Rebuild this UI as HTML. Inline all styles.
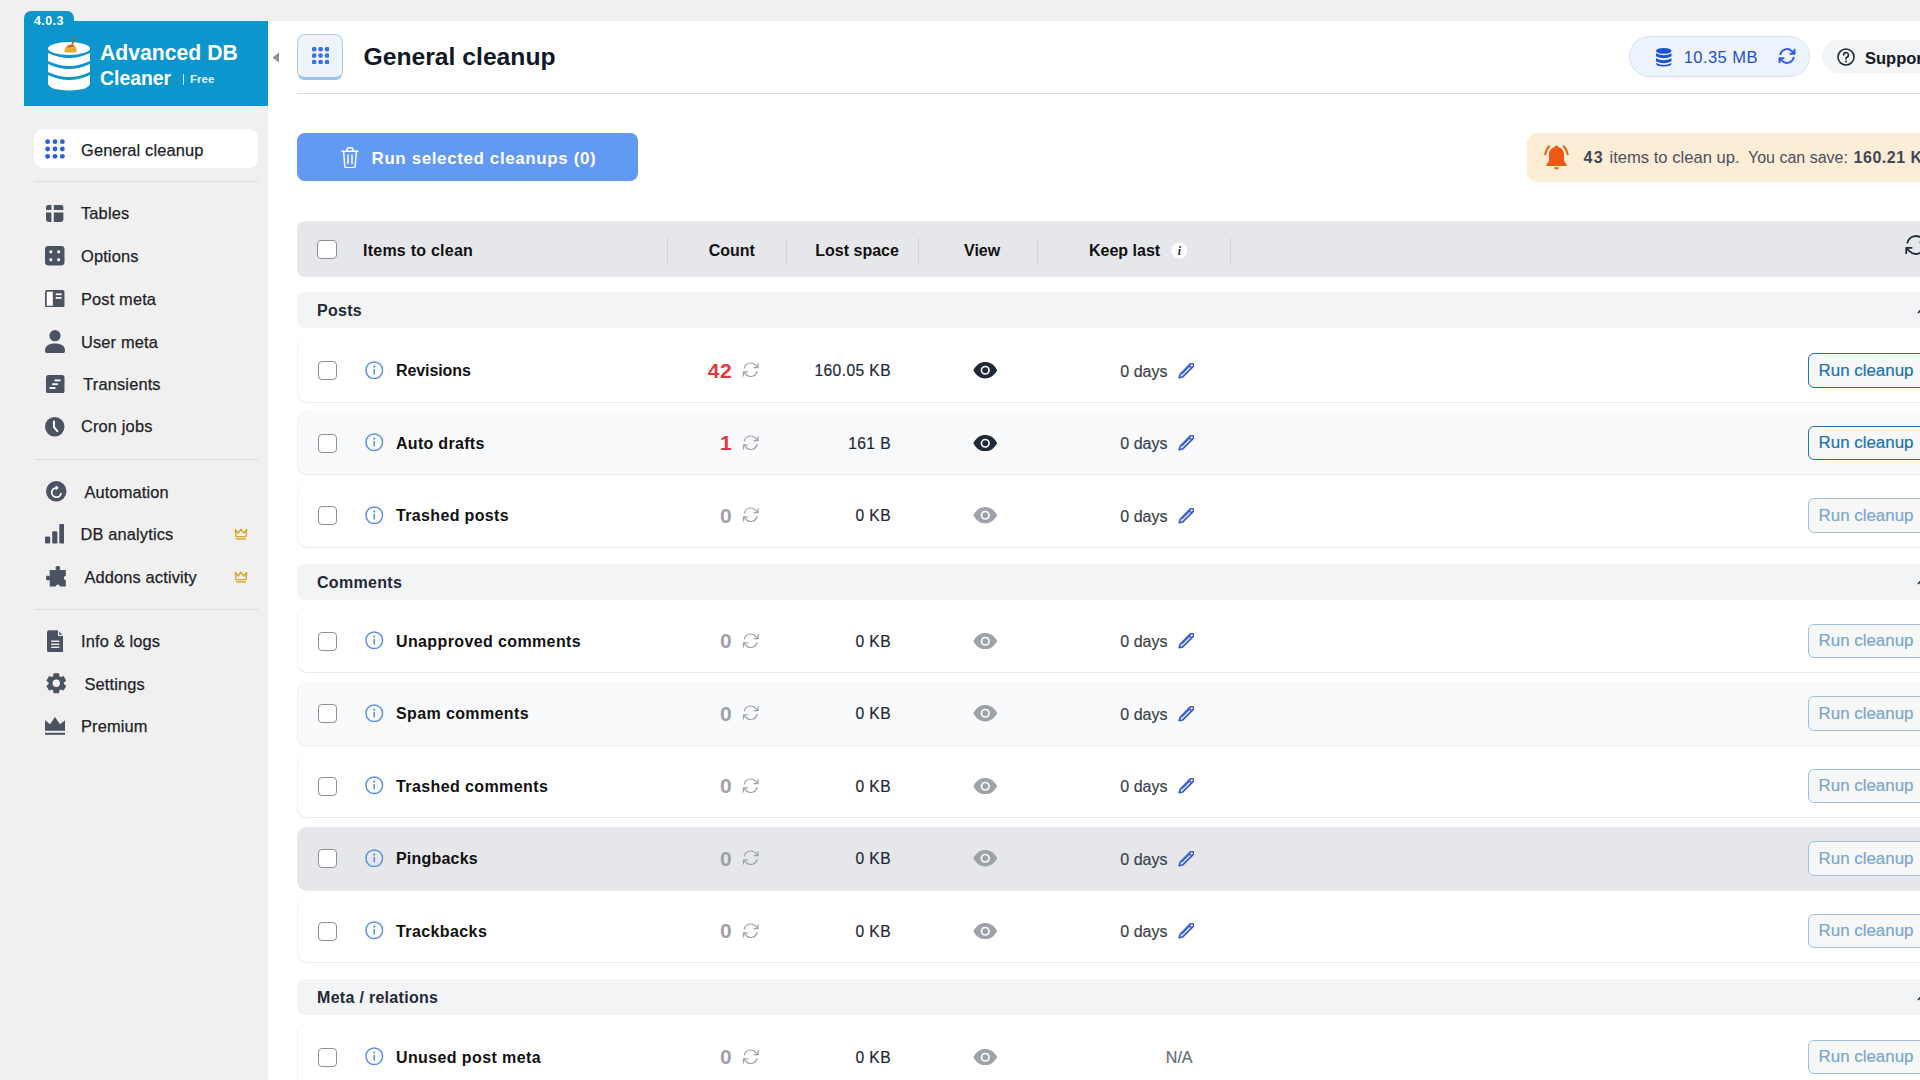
<!DOCTYPE html>
<html><head><meta charset="utf-8">
<style>
*{box-sizing:border-box;margin:0;padding:0}
html,body{width:1920px;height:1080px;overflow:hidden;background:#f0f0f1;font-family:"Liberation Sans",sans-serif;color:#1d2327}
.a{position:absolute}
.t{position:absolute;white-space:nowrap;line-height:1}
#main{position:absolute;left:268px;top:21px;width:1652px;height:1059px;background:#fff}
.nav{position:absolute;left:81px;font-size:16.4px;letter-spacing:0.15px;-webkit-text-stroke:0.25px #1d2327;color:#1d2327;white-space:nowrap;line-height:1}
.ni{position:absolute;left:45px;width:20px;height:20px}
.hsep{position:absolute;top:238px;width:1px;height:26px;background:#d2d4d9}
.sec{position:absolute;left:297px;width:1640px;height:36.3px;background:#f3f4f6;border-radius:8px}
.sec span{position:absolute;left:20px;top:11.4px;font-size:16px;letter-spacing:0.3px;font-weight:bold;color:#1f2937;line-height:1;white-space:nowrap}
.chev{position:absolute;left:1619.5px;top:14.5px}
.row{position:absolute;left:297px;width:1640px;height:64px;background:#fff;box-shadow:inset 0 -1px 0 #e8eaed,inset 1px 0 0 #f1f2f4;border-radius:10px}
.row.alt{background:#f9fafb}
.row.hov{background:#e5e7eb;box-shadow:none}
.cb{position:absolute;left:21px;top:22.5px;width:19px;height:19px;border:1.5px solid #8c8f94;border-radius:4px;background:#fff}
.inf{position:absolute;left:68.3px;top:22.3px}
.nm{position:absolute;left:99px;top:24.6px;font-size:16px;font-weight:bold;color:#111;line-height:1;white-space:nowrap}
.cnt{position:absolute;right:1205px;top:21.3px;letter-spacing:0.4px;font-size:21px;font-weight:bold;color:#9fa3a9;line-height:1}
.cnt.red{color:#e03a3e}
.rf{position:absolute;left:443.9px;top:21.6px}
.ls{position:absolute;right:1046px;top:24.9px;font-size:15.6px;letter-spacing:0.42px;-webkit-text-stroke:0.2px #1f2937;color:#1f2937;line-height:1;white-space:nowrap}
.eye{position:absolute;left:675.5px;top:23.5px}
.days{position:absolute;right:769.5px;top:25.1px;font-size:16px;color:#3c434a;-webkit-text-stroke:0.2px #3c434a;line-height:1;white-space:nowrap}
.days.na{right:744.5px;color:#6b7280}
.pen{position:absolute;left:880.5px;top:24.4px}
.btn{position:absolute;left:1511.4px;top:14.8px;width:140px;height:34.3px;border:1.3px solid #2271b1;border-radius:6px;background:#f6f7f7}
.btn span{position:absolute;left:9.2px;top:8.6px;font-size:16.9px;color:#2271b1;-webkit-text-stroke:0.2px currentColor;line-height:1;white-space:nowrap}
.btn.dis{border-color:#9ec0de}
.btn.dis span{color:#7aa6cf}
</style></head>
<body>
<!-- sidebar logo -->
<div class="a" style="left:24px;top:11px;width:50px;height:20px;background:#0c96cd;border-radius:7px 7px 0 0"></div>
<div class="a" style="left:24px;top:21px;width:244px;height:85px;background:#0c96cd"></div>
<div class="t" style="left:34px;top:15px;font-size:12.5px;font-weight:bold;color:#fff;letter-spacing:0.4px">4.0.3</div>
<svg class="a" style="left:47px;top:40px" width="45" height="52" viewBox="0 0 45 52">
 <g fill="#fff">
  <ellipse cx="22" cy="8.5" rx="21" ry="6.5"/>
  <path d="M1 13 Q22 23 43 13 V21 Q22 31 1 21Z"/>
  <path d="M1 24 Q22 34 43 24 V32 Q22 42 1 32Z"/>
  <path d="M1 35 Q22 45 43 35 V43 Q43 50 22 50.5 Q1 50 1 43Z"/>
 </g>
</svg>
<svg class="a" style="left:60px;top:34px" width="20" height="20" viewBox="0 0 20 20"><path d="M11.8 11L15.6 2.6" stroke="#8a6a3a" stroke-width="1.4" stroke-linecap="round"/><circle cx="15.6" cy="2.8" r="0.9" fill="#5aa070"/><path d="M4.6 18Q3.8 13.4 8.2 11.3L13.2 10.6Q16.8 13 16.9 18Q10.8 19.2 4.6 18Z" fill="#e9b13a"/><path d="M7.6 11.6L13.4 10.7L14.2 12.4L7.4 13.4Z" fill="#d8503a"/><path d="M7.5 15.5L7 18M10.5 14.5L10.5 18.5M13.5 14.5L14 18" stroke="#c88a20" stroke-width="0.6"/></svg>
<div class="t" style="left:100px;top:42px;font-size:21.2px;font-weight:bold;color:#fff">Advanced DB</div>
<div class="t" style="left:100px;top:68.5px;font-size:19.4px;font-weight:bold;color:#fff">Cleaner</div>
<div class="a" style="left:182.5px;top:74px;width:1.3px;height:11px;background:#cfe8f7"></div>
<div class="t" style="left:190px;top:74px;font-size:11.5px;font-weight:bold;color:#e3f2fb">Free</div>

<!-- main white -->
<div id="main"></div>

<!-- collapse arrow -->
<svg class="a" style="left:272px;top:52px" width="8" height="11" viewBox="0 0 8 11"><path d="M7 0.5 L0.5 5.5 L7 10.5Z" fill="#8e9399"/></svg>

<!-- nav active -->
<div class="a" style="left:34px;top:129px;width:224px;height:39px;background:#fff;border-radius:9px"></div>
<svg class="ni" style="top:139px;left:45px" width="19" height="19" viewBox="0 0 19 19"><g fill="#2f5fe0">
<circle cx="2.5" cy="2.5" r="2.3"/><circle cx="9.5" cy="2.5" r="2.3"/><circle cx="16.5" cy="2.5" r="2.3"/>
<circle cx="2.5" cy="9.5" r="2.3"/><circle cx="9.5" cy="9.5" r="2.3"/><circle cx="16.5" cy="9.5" r="2.3"/>
<circle cx="2.5" cy="16.5" r="2.3"/><circle cx="9.5" cy="16.5" r="2.3"/><circle cx="16.5" cy="16.5" r="2.3"/></g></svg>
<div class="nav" style="top:141.5px">General cleanup</div>
<div class="a" style="left:34px;top:180.5px;width:224px;height:1.5px;background:#dcdcde"></div>


<!-- nav items -->
<svg class="a" style="left:46.4px;top:205px" width="17.4" height="17" viewBox="0 0 17.4 17"><g fill="#4b5362">
<path d="M2.5 0H5.4V5H0V2.5A2.5 2.5 0 0 1 2.5 0Z"/><path d="M7.8 0H14.9A2.5 2.5 0 0 1 17.4 2.5V5H7.8Z"/><path d="M0 7.6H5.4V17H2.5A2.5 2.5 0 0 1 0 14.5Z"/><path d="M7.8 7.6H17.4V14.5A2.5 2.5 0 0 1 14.9 17H7.8Z"/></g></svg>
<div class="nav" style="top:205.4px">Tables</div>
<svg class="a" style="left:45.2px;top:246.1px" width="19.5" height="19.5" viewBox="0 0 20 20"><rect width="20" height="20" rx="3.5" fill="#4b5362"/><g fill="#fff"><circle cx="6" cy="6" r="1.6"/><circle cx="14" cy="6" r="1.6"/><circle cx="6" cy="14" r="1.6"/><circle cx="14" cy="14" r="1.6"/></g></svg>
<div class="nav" style="top:248.3px">Options</div>
<svg class="a" style="left:45.2px;top:289.6px" width="19.5" height="17.5" viewBox="0 0 20 18"><rect width="20" height="18" rx="2" fill="#4b5362"/><rect x="1.8" y="1.8" width="6.2" height="14.4" fill="#fff"/><rect x="11" y="3.5" width="6" height="1.8" fill="#fff"/><rect x="11" y="7.2" width="6" height="1.8" fill="#fff"/></svg>
<div class="nav" style="top:290.9px">Post meta</div>
<svg class="a" style="left:45px;top:329.8px" width="20" height="23.2" viewBox="0 0 20 23"><g fill="#4b5362"><circle cx="10" cy="5.6" r="5.6"/><path d="M0 20.5C0 15.5 4 13.3 10 13.3S20 15.5 20 20.5V21A2 2 0 0 1 18 23H2A2 2 0 0 1 0 21Z"/></g></svg>
<div class="nav" style="top:333.5px">User meta</div>
<svg class="a" style="left:46.3px;top:374.8px" width="18.5" height="18.5" viewBox="0 0 18.5 18.5"><rect width="18.5" height="18.5" rx="2.5" fill="#4b5362"/><g fill="#fff"><rect x="8.5" y="4.5" width="6" height="1.8"/><rect x="6" y="8.3" width="6" height="1.8"/><rect x="3.5" y="12.1" width="6" height="1.8"/></g></svg>
<div class="nav" style="top:375.7px;left:83.3px">Transients</div>
<svg class="a" style="left:45px;top:417.4px" width="19.5" height="19.5" viewBox="0 0 20 20"><circle cx="10" cy="10" r="10" fill="#4b5362"/><path d="M9.2 4.5V10.5L12.6 14.6" stroke="#fff" stroke-width="2" fill="none" stroke-linecap="round"/></svg>
<div class="nav" style="top:418.1px">Cron jobs</div>
<div class="a" style="left:34px;top:458.5px;width:224px;height:1.5px;background:#dcdcde"></div>

<svg class="a" style="left:46px;top:481px" width="20.5" height="20.5" viewBox="0 0 20 20"><circle cx="10" cy="10" r="10" fill="#4b5362"/><path d="M14.6 12.4A4.6 4.6 0 1 1 10 6.6" stroke="#fff" stroke-width="1.7" fill="none" stroke-linecap="round"/><path d="M9.5 4.1L12.4 6.7L9.5 9.3Z" fill="#fff"/></svg>
<div class="nav" style="top:483.5px;left:84.4px">Automation</div>
<svg class="a" style="left:44.8px;top:524.2px" width="19.5" height="19.5" viewBox="0 0 19.5 19.5"><g fill="#4b5362"><rect x="0" y="12.5" width="5.2" height="7" rx="1.3"/><rect x="7.2" y="7.2" width="5.2" height="12.3" rx="1.3"/><rect x="14.3" y="0" width="5.2" height="19.5" rx="1.3"/></g></svg>
<div class="nav" style="top:525.7px;left:80.5px">DB analytics</div>
<svg class="a" style="left:234px;top:528px" width="14" height="12" viewBox="0 0 14 12"><path d="M1.3 1.5L4.2 5L7 1.2L9.8 5L12.7 1.5L12 8.6H2Z" fill="none" stroke="#d6a624" stroke-width="1.4" stroke-linejoin="round"/><rect x="2" y="10.2" width="10" height="1.4" fill="#d6a624"/></svg>
<svg class="a" style="left:46.2px;top:566.3px" width="20" height="20.5" viewBox="0 0 20 20.5"><path fill="#4b5362" d="M3.7 3.9H10.4A2.3 2.3 0 1 1 13.4 3.9H19.8V10.1A2 2 0 0 0 19.8 14.1V20.4H13.9A2 2 0 0 0 9.9 20.4H3.7V13.5A2.3 2.3 0 1 1 3.7 10.5Z"/></svg>
<div class="nav" style="top:568.6px;left:84.4px">Addons activity</div>
<svg class="a" style="left:234px;top:571px" width="14" height="12" viewBox="0 0 14 12"><path d="M1.3 1.5L4.2 5L7 1.2L9.8 5L12.7 1.5L12 8.6H2Z" fill="none" stroke="#d6a624" stroke-width="1.4" stroke-linejoin="round"/><rect x="2" y="10.2" width="10" height="1.4" fill="#d6a624"/></svg>
<div class="a" style="left:34px;top:608.5px;width:224px;height:1.5px;background:#dcdcde"></div>

<svg class="a" style="left:46.6px;top:629.6px" width="16.7" height="22.5" viewBox="0 0 17 22.5"><path fill="#4b5362" d="M2 0H11L17 6V20.5A2 2 0 0 1 15 22.5H2A2 2 0 0 1 0 20.5V2A2 2 0 0 1 2 0Z"/><path d="M11.8 0.4V5.2H16.6" fill="none" stroke="#f0f0f1" stroke-width="1.2"/><g fill="#f0f0f1"><rect x="4.2" y="10.5" width="8.4" height="1.4"/><rect x="4.2" y="13.6" width="8.4" height="1.4"/><rect x="4.2" y="16.7" width="8.4" height="1.4"/></g></svg>
<div class="nav" style="top:633.2px">Info &amp; logs</div>
<svg class="a" style="left:45.8px;top:673.1px" width="20.6" height="20.6" viewBox="0 0 20.6 20.6"><path fill="#4b5362" fill-rule="evenodd" d="M13.59 3.45 L12.97 0.35 L7.63 0.35 L7.01 3.45 L6.01 4.03 L3.02 3.01 L0.35 7.64 L2.72 9.72 L2.72 10.88 L0.35 12.96 L3.02 17.59 L6.01 16.57 L7.01 17.15 L7.63 20.25 L12.97 20.25 L13.59 17.15 L14.59 16.57 L17.58 17.59 L20.25 12.96 L17.88 10.88 L17.88 9.72 L20.25 7.64 L17.58 3.01 L14.59 4.03Z M10.3 6.6A3.7 3.7 0 1 0 10.3 14A3.7 3.7 0 1 0 10.3 6.6Z"/></svg>
<div class="nav" style="top:675.7px;left:84.5px">Settings</div>
<svg class="a" style="left:45.1px;top:717px" width="20" height="18" viewBox="0 0 20 18"><path fill="#4b5362" d="M0 3.3L5 7.2L10 0L15 7.2L20 3.3V13.8H0Z"/><rect y="15.8" width="20" height="2" fill="#4b5362"/></svg>
<div class="nav" style="top:718.4px">Premium</div>


<!-- header -->
<div class="a" style="left:297px;top:33.6px;width:46px;height:46px;background:#eef3fc;border:1.2px solid #bccbe6;border-bottom:3px solid #98c2f2;border-radius:8px"></div>
<svg class="a" style="left:311.7px;top:46.9px" width="17.2" height="17.2" viewBox="0 0 17.2 17.2"><g fill="#3b73e0">
<circle cx="2.15" cy="2.15" r="2.35"/><circle cx="8.6" cy="2.15" r="2.35"/><circle cx="15.05" cy="2.15" r="2.35"/>
<circle cx="2.15" cy="8.6" r="2.35"/><circle cx="8.6" cy="8.6" r="2.35"/><circle cx="15.05" cy="8.6" r="2.35"/>
<circle cx="2.15" cy="15.05" r="2.35"/><circle cx="8.6" cy="15.05" r="2.35"/><circle cx="15.05" cy="15.05" r="2.35"/></g></svg>
<div class="t" style="left:363.5px;top:45px;font-size:24.7px;font-weight:bold;color:#101828">General cleanup</div>
<div class="a" style="left:297px;top:92.5px;width:1623px;height:1.3px;background:#dcdde0"></div>

<div class="a" style="left:1629px;top:36.3px;width:181px;height:40.5px;background:#eef4fe;border:1px solid #d5e1f5;border-radius:21px"></div>
<svg class="a" style="left:1656px;top:48px" width="15.5" height="18.5" viewBox="0 0 15.5 18.5"><g fill="#1e4fd6"><ellipse cx="7.75" cy="2.9" rx="7.75" ry="2.9"/><path d="M0 5.2Q7.75 9.2 15.5 5.2V8.3Q7.75 12.3 0 8.3Z"/><path d="M0 10.3Q7.75 14.3 15.5 10.3V13.2Q7.75 17.2 0 13.2Z"/><path d="M0 15Q7.75 19 15.5 15V15.6Q15.5 18.5 7.75 18.5Q0 18.5 0 15.6Z"/></g></svg>
<div class="t" style="left:1683.7px;top:49.3px;font-size:16.5px;letter-spacing:0.45px;color:#1f4fc6">10.35 MB</div>
<svg class="a" style="left:1776.5px;top:46.3px" width="20" height="20" viewBox="0 0 24 24"><path fill="none" stroke="#2d5fdc" stroke-width="2.3" stroke-linecap="round" stroke-linejoin="round" d="M16.023 9.348h4.992v-.001M2.985 19.644v-4.992m0 0h4.992m-4.993 0 3.181 3.183a8.25 8.25 0 0 0 13.803-3.7M4.031 9.865a8.25 8.25 0 0 1 13.803-3.7l3.181 3.182m0-4.991v4.99"/></svg>

<div class="a" style="left:1821.5px;top:39.8px;width:140px;height:33.6px;background:#f3f4f6;border-radius:17px"></div>
<svg class="a" style="left:1836.8px;top:48.4px" width="18" height="18" viewBox="0 0 18 18"><circle cx="9" cy="9" r="8" fill="none" stroke="#1f2937" stroke-width="1.6"/><path d="M6.6 7A2.4 2.4 0 1 1 9.9 9.2C9.3 9.5 9 9.9 9 10.6V11" fill="none" stroke="#1f2937" stroke-width="1.6" stroke-linecap="round"/><circle cx="9" cy="13.4" r="1" fill="#1f2937"/></svg>
<div class="t" style="left:1865px;top:49.5px;font-size:16.5px;font-weight:bold;color:#111827">Support</div>

<!-- run selected -->
<div class="a" style="left:297px;top:133px;width:341px;height:48.3px;background:#6299f3;border-radius:8px"></div>
<svg class="a" style="left:340.5px;top:146.5px" width="18" height="21.5" viewBox="0 0 18 21.5"><g fill="none" stroke="#fff" stroke-width="1.5" stroke-linecap="round" stroke-linejoin="round"><path d="M1 4.3H17"/><path d="M6 4.2V2.6A1.8 1.8 0 0 1 7.8 0.8H10.2A1.8 1.8 0 0 1 12 2.6V4.2"/><path d="M2.6 4.3L3.8 19A1.9 1.9 0 0 0 5.7 20.7H12.3A1.9 1.9 0 0 0 14.2 19L15.4 4.3"/><path d="M7 8V16.5"/><path d="M11 8V16.5"/></g></svg>
<div class="t" style="left:371.5px;top:149.6px;font-size:17px;font-weight:bold;letter-spacing:0.6px;color:#fff">Run selected cleanups (0)</div>

<!-- notice -->
<div class="a" style="left:1527px;top:133px;width:420px;height:48.5px;background:#fdecd6;border-radius:10px"></div>
<svg class="a" style="left:1535px;top:138px" width="45" height="40" viewBox="0 0 45 40"><g fill="#ea5a12"><path d="M21.5 7.4C22.6 7.4 23.1 8.2 23.1 9.1C26.6 9.9 29 12.9 29 16.6V22.6L31.9 27.6A0.4 0.4 0 0 1 31.6 28H11.4A0.4 0.4 0 0 1 11.1 27.6L14 22.6V16.6C14 12.9 16.4 9.9 19.9 9.1C19.9 8.2 20.4 7.4 21.5 7.4Z"/><path d="M19.2 29.3H23.8A2.3 2.3 0 0 1 19.2 29.3Z"/></g><g fill="none" stroke="#ea5a12" stroke-width="1.9" stroke-linecap="round"><path d="M14.3 8.3Q11 11.3 10.2 16.3"/><path d="M28.7 8.3Q32 11.3 32.8 16.3"/></g></svg>
<div class="t" style="left:1583.6px;top:149.6px;font-size:16px;font-weight:bold;letter-spacing:1.2px;color:#3f4754">43</div>
<div class="t" style="left:1609.5px;top:149.6px;font-size:16.6px;color:#4b5260">items to clean up.</div>
<div class="t" style="left:1748px;top:149.6px;font-size:16px;color:#4b5260">You can save:</div>
<div class="t" style="left:1853.6px;top:149.6px;font-size:16px;font-weight:bold;letter-spacing:0.5px;color:#3f4754">160.21 KB</div>

<!-- table header -->
<div class="a" style="left:297px;top:221px;width:1640px;height:56px;background:#e5e7eb;border-radius:8px"></div>
<div class="a" style="left:317px;top:239.5px;width:19.5px;height:19.5px;background:#fff;border:1.5px solid #8c8f94;border-radius:4px"></div>
<div class="t" style="left:363px;top:242.7px;letter-spacing:0.24px;font-size:16px;font-weight:bold;color:#111">Items to clean</div>
<div class="hsep" style="left:666.5px"></div>
<div class="t" style="left:708.7px;top:242.7px;font-size:16px;font-weight:bold;color:#111">Count</div>
<div class="hsep" style="left:786px"></div>
<div class="t" style="left:815.3px;top:242.7px;font-size:16px;font-weight:bold;color:#111">Lost space</div>
<div class="hsep" style="left:918px"></div>
<div class="t" style="left:964px;top:242.7px;font-size:16px;font-weight:bold;color:#111">View</div>
<div class="hsep" style="left:1037px"></div>
<div class="t" style="left:1089px;top:242.7px;font-size:16px;font-weight:bold;color:#111">Keep last</div>
<svg class="a" style="left:1171px;top:241.5px" width="17" height="17" viewBox="0 0 17 17"><circle cx="8.5" cy="8.5" r="8" fill="#fff"/><text x="8.5" y="12.8" text-anchor="middle" font-family="Liberation Serif" font-style="italic" font-weight="bold" font-size="12" fill="#1f2937">i</text></svg>
<div class="hsep" style="left:1230px"></div>
<svg class="a" style="left:1902.8px;top:231.7px" width="26" height="26" viewBox="0 0 24 24"><path fill="none" stroke="#1f2937" stroke-width="1.65" stroke-linecap="round" stroke-linejoin="round" d="M16.023 9.348h4.992v-.001M2.985 19.644v-4.992m0 0h4.992m-4.993 0 3.181 3.183a8.25 8.25 0 0 0 13.803-3.7M4.031 9.865a8.25 8.25 0 0 1 13.803-3.7l3.181 3.182m0-4.991v4.99"/></svg>

<!-- rows -->
<div class="sec" style="top:292px"><span>Posts</span><svg class="chev" width="10" height="7" viewBox="0 0 10 7"><path d="M1 6L5 2L9 6" fill="none" stroke="#1f2937" stroke-width="1.6"/></svg></div>
<div class="row" style="top:338.5px"><div class="cb"></div><svg class="inf" width="18.5" height="18.5" viewBox="0 0 18 18"><circle cx="9" cy="9" r="8.1" fill="none" stroke="#5b8fe6" stroke-width="1.4"/><circle cx="9" cy="5.4" r="1.05" fill="#5b8fe6"/><rect x="8.25" y="7.6" width="1.5" height="5.6" rx="0.6" fill="#5b8fe6"/></svg><div class="nm" style="letter-spacing:-0.1px">Revisions</div><div class="cnt red">42</div><svg class="rf" width="19.5" height="19.5" viewBox="0 0 24 24"><path fill="none" stroke="#9fa3a9" stroke-width="1.45" stroke-linecap="round" stroke-linejoin="round" d="M16.023 9.348h4.992v-.001M2.985 19.644v-4.992m0 0h4.992m-4.993 0 3.181 3.183a8.25 8.25 0 0 0 13.803-3.7M4.031 9.865a8.25 8.25 0 0 1 13.803-3.7l3.181 3.182m0-4.991v4.99"/></svg><div class="ls">160.05 KB</div><svg class="eye" width="24.5" height="16.5" viewBox="0 0 24 16"><path d="M0.3 8C3.5 2.2 7.5 0 12 0S20.5 2.2 23.7 8C20.5 13.8 16.5 16 12 16S3.5 13.8 0.3 8Z" fill="#1f2937"/><circle cx="12" cy="8" r="4.5" fill="#fff"/><circle cx="12" cy="8" r="2.9" fill="#1f2937"/></svg><div class="days">0 days</div><svg class="pen" width="16" height="16" viewBox="0 0 16 16"><path d="M1.2 14.8L2.1 11.2L12.4 0.9A1.9 1.9 0 0 1 15.1 3.6L4.8 13.9Z" fill="#dbe5fa" stroke="#3558c8" stroke-width="1.55" stroke-linejoin="round"/><path d="M11 2.4L13.6 5" stroke="#3558c8" stroke-width="1.4"/><path d="M3.8 11.3L12.2 2.9" stroke="#3558c8" stroke-width="1"/></svg><div class="btn"><span>Run cleanup</span></div></div>
<div class="row alt" style="top:411px"><div class="cb"></div><svg class="inf" width="18.5" height="18.5" viewBox="0 0 18 18"><circle cx="9" cy="9" r="8.1" fill="none" stroke="#5b8fe6" stroke-width="1.4"/><circle cx="9" cy="5.4" r="1.05" fill="#5b8fe6"/><rect x="8.25" y="7.6" width="1.5" height="5.6" rx="0.6" fill="#5b8fe6"/></svg><div class="nm" style="letter-spacing:0.3px">Auto drafts</div><div class="cnt red">1</div><svg class="rf" width="19.5" height="19.5" viewBox="0 0 24 24"><path fill="none" stroke="#9fa3a9" stroke-width="1.45" stroke-linecap="round" stroke-linejoin="round" d="M16.023 9.348h4.992v-.001M2.985 19.644v-4.992m0 0h4.992m-4.993 0 3.181 3.183a8.25 8.25 0 0 0 13.803-3.7M4.031 9.865a8.25 8.25 0 0 1 13.803-3.7l3.181 3.182m0-4.991v4.99"/></svg><div class="ls">161 B</div><svg class="eye" width="24.5" height="16.5" viewBox="0 0 24 16"><path d="M0.3 8C3.5 2.2 7.5 0 12 0S20.5 2.2 23.7 8C20.5 13.8 16.5 16 12 16S3.5 13.8 0.3 8Z" fill="#1f2937"/><circle cx="12" cy="8" r="4.5" fill="#fff"/><circle cx="12" cy="8" r="2.9" fill="#1f2937"/></svg><div class="days">0 days</div><svg class="pen" width="16" height="16" viewBox="0 0 16 16"><path d="M1.2 14.8L2.1 11.2L12.4 0.9A1.9 1.9 0 0 1 15.1 3.6L4.8 13.9Z" fill="#dbe5fa" stroke="#3558c8" stroke-width="1.55" stroke-linejoin="round"/><path d="M11 2.4L13.6 5" stroke="#3558c8" stroke-width="1.4"/><path d="M3.8 11.3L12.2 2.9" stroke="#3558c8" stroke-width="1"/></svg><div class="btn"><span>Run cleanup</span></div></div>
<div class="row" style="top:483.5px"><div class="cb"></div><svg class="inf" width="18.5" height="18.5" viewBox="0 0 18 18"><circle cx="9" cy="9" r="8.1" fill="none" stroke="#5b8fe6" stroke-width="1.4"/><circle cx="9" cy="5.4" r="1.05" fill="#5b8fe6"/><rect x="8.25" y="7.6" width="1.5" height="5.6" rx="0.6" fill="#5b8fe6"/></svg><div class="nm" style="letter-spacing:0.35px">Trashed posts</div><div class="cnt">0</div><svg class="rf" width="19.5" height="19.5" viewBox="0 0 24 24"><path fill="none" stroke="#9fa3a9" stroke-width="1.45" stroke-linecap="round" stroke-linejoin="round" d="M16.023 9.348h4.992v-.001M2.985 19.644v-4.992m0 0h4.992m-4.993 0 3.181 3.183a8.25 8.25 0 0 0 13.803-3.7M4.031 9.865a8.25 8.25 0 0 1 13.803-3.7l3.181 3.182m0-4.991v4.99"/></svg><div class="ls">0 KB</div><svg class="eye" width="24.5" height="16.5" viewBox="0 0 24 16"><path d="M0.3 8C3.5 2.2 7.5 0 12 0S20.5 2.2 23.7 8C20.5 13.8 16.5 16 12 16S3.5 13.8 0.3 8Z" fill="#9fa3a9"/><circle cx="12" cy="8" r="4.5" fill="#fff"/><circle cx="12" cy="8" r="2.9" fill="#9fa3a9"/></svg><div class="days">0 days</div><svg class="pen" width="16" height="16" viewBox="0 0 16 16"><path d="M1.2 14.8L2.1 11.2L12.4 0.9A1.9 1.9 0 0 1 15.1 3.6L4.8 13.9Z" fill="#dbe5fa" stroke="#3558c8" stroke-width="1.55" stroke-linejoin="round"/><path d="M11 2.4L13.6 5" stroke="#3558c8" stroke-width="1.4"/><path d="M3.8 11.3L12.2 2.9" stroke="#3558c8" stroke-width="1"/></svg><div class="btn dis"><span>Run cleanup</span></div></div>
<div class="sec" style="top:563.5px"><span>Comments</span><svg class="chev" width="10" height="7" viewBox="0 0 10 7"><path d="M1 6L5 2L9 6" fill="none" stroke="#1f2937" stroke-width="1.6"/></svg></div>
<div class="row" style="top:609px"><div class="cb"></div><svg class="inf" width="18.5" height="18.5" viewBox="0 0 18 18"><circle cx="9" cy="9" r="8.1" fill="none" stroke="#5b8fe6" stroke-width="1.4"/><circle cx="9" cy="5.4" r="1.05" fill="#5b8fe6"/><rect x="8.25" y="7.6" width="1.5" height="5.6" rx="0.6" fill="#5b8fe6"/></svg><div class="nm" style="letter-spacing:0.38px">Unapproved comments</div><div class="cnt">0</div><svg class="rf" width="19.5" height="19.5" viewBox="0 0 24 24"><path fill="none" stroke="#9fa3a9" stroke-width="1.45" stroke-linecap="round" stroke-linejoin="round" d="M16.023 9.348h4.992v-.001M2.985 19.644v-4.992m0 0h4.992m-4.993 0 3.181 3.183a8.25 8.25 0 0 0 13.803-3.7M4.031 9.865a8.25 8.25 0 0 1 13.803-3.7l3.181 3.182m0-4.991v4.99"/></svg><div class="ls">0 KB</div><svg class="eye" width="24.5" height="16.5" viewBox="0 0 24 16"><path d="M0.3 8C3.5 2.2 7.5 0 12 0S20.5 2.2 23.7 8C20.5 13.8 16.5 16 12 16S3.5 13.8 0.3 8Z" fill="#9fa3a9"/><circle cx="12" cy="8" r="4.5" fill="#fff"/><circle cx="12" cy="8" r="2.9" fill="#9fa3a9"/></svg><div class="days">0 days</div><svg class="pen" width="16" height="16" viewBox="0 0 16 16"><path d="M1.2 14.8L2.1 11.2L12.4 0.9A1.9 1.9 0 0 1 15.1 3.6L4.8 13.9Z" fill="#dbe5fa" stroke="#3558c8" stroke-width="1.55" stroke-linejoin="round"/><path d="M11 2.4L13.6 5" stroke="#3558c8" stroke-width="1.4"/><path d="M3.8 11.3L12.2 2.9" stroke="#3558c8" stroke-width="1"/></svg><div class="btn dis"><span>Run cleanup</span></div></div>
<div class="row alt" style="top:681.5px"><div class="cb"></div><svg class="inf" width="18.5" height="18.5" viewBox="0 0 18 18"><circle cx="9" cy="9" r="8.1" fill="none" stroke="#5b8fe6" stroke-width="1.4"/><circle cx="9" cy="5.4" r="1.05" fill="#5b8fe6"/><rect x="8.25" y="7.6" width="1.5" height="5.6" rx="0.6" fill="#5b8fe6"/></svg><div class="nm" style="letter-spacing:0.38px">Spam comments</div><div class="cnt">0</div><svg class="rf" width="19.5" height="19.5" viewBox="0 0 24 24"><path fill="none" stroke="#9fa3a9" stroke-width="1.45" stroke-linecap="round" stroke-linejoin="round" d="M16.023 9.348h4.992v-.001M2.985 19.644v-4.992m0 0h4.992m-4.993 0 3.181 3.183a8.25 8.25 0 0 0 13.803-3.7M4.031 9.865a8.25 8.25 0 0 1 13.803-3.7l3.181 3.182m0-4.991v4.99"/></svg><div class="ls">0 KB</div><svg class="eye" width="24.5" height="16.5" viewBox="0 0 24 16"><path d="M0.3 8C3.5 2.2 7.5 0 12 0S20.5 2.2 23.7 8C20.5 13.8 16.5 16 12 16S3.5 13.8 0.3 8Z" fill="#9fa3a9"/><circle cx="12" cy="8" r="4.5" fill="#fff"/><circle cx="12" cy="8" r="2.9" fill="#9fa3a9"/></svg><div class="days">0 days</div><svg class="pen" width="16" height="16" viewBox="0 0 16 16"><path d="M1.2 14.8L2.1 11.2L12.4 0.9A1.9 1.9 0 0 1 15.1 3.6L4.8 13.9Z" fill="#dbe5fa" stroke="#3558c8" stroke-width="1.55" stroke-linejoin="round"/><path d="M11 2.4L13.6 5" stroke="#3558c8" stroke-width="1.4"/><path d="M3.8 11.3L12.2 2.9" stroke="#3558c8" stroke-width="1"/></svg><div class="btn dis"><span>Run cleanup</span></div></div>
<div class="row" style="top:754px"><div class="cb"></div><svg class="inf" width="18.5" height="18.5" viewBox="0 0 18 18"><circle cx="9" cy="9" r="8.1" fill="none" stroke="#5b8fe6" stroke-width="1.4"/><circle cx="9" cy="5.4" r="1.05" fill="#5b8fe6"/><rect x="8.25" y="7.6" width="1.5" height="5.6" rx="0.6" fill="#5b8fe6"/></svg><div class="nm" style="letter-spacing:0.4px">Trashed comments</div><div class="cnt">0</div><svg class="rf" width="19.5" height="19.5" viewBox="0 0 24 24"><path fill="none" stroke="#9fa3a9" stroke-width="1.45" stroke-linecap="round" stroke-linejoin="round" d="M16.023 9.348h4.992v-.001M2.985 19.644v-4.992m0 0h4.992m-4.993 0 3.181 3.183a8.25 8.25 0 0 0 13.803-3.7M4.031 9.865a8.25 8.25 0 0 1 13.803-3.7l3.181 3.182m0-4.991v4.99"/></svg><div class="ls">0 KB</div><svg class="eye" width="24.5" height="16.5" viewBox="0 0 24 16"><path d="M0.3 8C3.5 2.2 7.5 0 12 0S20.5 2.2 23.7 8C20.5 13.8 16.5 16 12 16S3.5 13.8 0.3 8Z" fill="#9fa3a9"/><circle cx="12" cy="8" r="4.5" fill="#fff"/><circle cx="12" cy="8" r="2.9" fill="#9fa3a9"/></svg><div class="days">0 days</div><svg class="pen" width="16" height="16" viewBox="0 0 16 16"><path d="M1.2 14.8L2.1 11.2L12.4 0.9A1.9 1.9 0 0 1 15.1 3.6L4.8 13.9Z" fill="#dbe5fa" stroke="#3558c8" stroke-width="1.55" stroke-linejoin="round"/><path d="M11 2.4L13.6 5" stroke="#3558c8" stroke-width="1.4"/><path d="M3.8 11.3L12.2 2.9" stroke="#3558c8" stroke-width="1"/></svg><div class="btn dis"><span>Run cleanup</span></div></div>
<div class="row hov" style="top:826.5px"><div class="cb"></div><svg class="inf" width="18.5" height="18.5" viewBox="0 0 18 18"><circle cx="9" cy="9" r="8.1" fill="none" stroke="#5b8fe6" stroke-width="1.4"/><circle cx="9" cy="5.4" r="1.05" fill="#5b8fe6"/><rect x="8.25" y="7.6" width="1.5" height="5.6" rx="0.6" fill="#5b8fe6"/></svg><div class="nm" style="letter-spacing:0.2px">Pingbacks</div><div class="cnt">0</div><svg class="rf" width="19.5" height="19.5" viewBox="0 0 24 24"><path fill="none" stroke="#9fa3a9" stroke-width="1.45" stroke-linecap="round" stroke-linejoin="round" d="M16.023 9.348h4.992v-.001M2.985 19.644v-4.992m0 0h4.992m-4.993 0 3.181 3.183a8.25 8.25 0 0 0 13.803-3.7M4.031 9.865a8.25 8.25 0 0 1 13.803-3.7l3.181 3.182m0-4.991v4.99"/></svg><div class="ls">0 KB</div><svg class="eye" width="24.5" height="16.5" viewBox="0 0 24 16"><path d="M0.3 8C3.5 2.2 7.5 0 12 0S20.5 2.2 23.7 8C20.5 13.8 16.5 16 12 16S3.5 13.8 0.3 8Z" fill="#9fa3a9"/><circle cx="12" cy="8" r="4.5" fill="#fff"/><circle cx="12" cy="8" r="2.9" fill="#9fa3a9"/></svg><div class="days">0 days</div><svg class="pen" width="16" height="16" viewBox="0 0 16 16"><path d="M1.2 14.8L2.1 11.2L12.4 0.9A1.9 1.9 0 0 1 15.1 3.6L4.8 13.9Z" fill="#dbe5fa" stroke="#3558c8" stroke-width="1.55" stroke-linejoin="round"/><path d="M11 2.4L13.6 5" stroke="#3558c8" stroke-width="1.4"/><path d="M3.8 11.3L12.2 2.9" stroke="#3558c8" stroke-width="1"/></svg><div class="btn dis"><span>Run cleanup</span></div></div>
<div class="row" style="top:899px"><div class="cb"></div><svg class="inf" width="18.5" height="18.5" viewBox="0 0 18 18"><circle cx="9" cy="9" r="8.1" fill="none" stroke="#5b8fe6" stroke-width="1.4"/><circle cx="9" cy="5.4" r="1.05" fill="#5b8fe6"/><rect x="8.25" y="7.6" width="1.5" height="5.6" rx="0.6" fill="#5b8fe6"/></svg><div class="nm" style="letter-spacing:0.4px">Trackbacks</div><div class="cnt">0</div><svg class="rf" width="19.5" height="19.5" viewBox="0 0 24 24"><path fill="none" stroke="#9fa3a9" stroke-width="1.45" stroke-linecap="round" stroke-linejoin="round" d="M16.023 9.348h4.992v-.001M2.985 19.644v-4.992m0 0h4.992m-4.993 0 3.181 3.183a8.25 8.25 0 0 0 13.803-3.7M4.031 9.865a8.25 8.25 0 0 1 13.803-3.7l3.181 3.182m0-4.991v4.99"/></svg><div class="ls">0 KB</div><svg class="eye" width="24.5" height="16.5" viewBox="0 0 24 16"><path d="M0.3 8C3.5 2.2 7.5 0 12 0S20.5 2.2 23.7 8C20.5 13.8 16.5 16 12 16S3.5 13.8 0.3 8Z" fill="#9fa3a9"/><circle cx="12" cy="8" r="4.5" fill="#fff"/><circle cx="12" cy="8" r="2.9" fill="#9fa3a9"/></svg><div class="days">0 days</div><svg class="pen" width="16" height="16" viewBox="0 0 16 16"><path d="M1.2 14.8L2.1 11.2L12.4 0.9A1.9 1.9 0 0 1 15.1 3.6L4.8 13.9Z" fill="#dbe5fa" stroke="#3558c8" stroke-width="1.55" stroke-linejoin="round"/><path d="M11 2.4L13.6 5" stroke="#3558c8" stroke-width="1.4"/><path d="M3.8 11.3L12.2 2.9" stroke="#3558c8" stroke-width="1"/></svg><div class="btn dis"><span>Run cleanup</span></div></div>
<div class="sec" style="top:979px"><span>Meta / relations</span><svg class="chev" width="10" height="7" viewBox="0 0 10 7"><path d="M1 6L5 2L9 6" fill="none" stroke="#1f2937" stroke-width="1.6"/></svg></div>
<div class="row" style="top:1025px"><div class="cb"></div><svg class="inf" width="18.5" height="18.5" viewBox="0 0 18 18"><circle cx="9" cy="9" r="8.1" fill="none" stroke="#5b8fe6" stroke-width="1.4"/><circle cx="9" cy="5.4" r="1.05" fill="#5b8fe6"/><rect x="8.25" y="7.6" width="1.5" height="5.6" rx="0.6" fill="#5b8fe6"/></svg><div class="nm" style="letter-spacing:0.39px">Unused post meta</div><div class="cnt">0</div><svg class="rf" width="19.5" height="19.5" viewBox="0 0 24 24"><path fill="none" stroke="#9fa3a9" stroke-width="1.45" stroke-linecap="round" stroke-linejoin="round" d="M16.023 9.348h4.992v-.001M2.985 19.644v-4.992m0 0h4.992m-4.993 0 3.181 3.183a8.25 8.25 0 0 0 13.803-3.7M4.031 9.865a8.25 8.25 0 0 1 13.803-3.7l3.181 3.182m0-4.991v4.99"/></svg><div class="ls">0 KB</div><svg class="eye" width="24.5" height="16.5" viewBox="0 0 24 16"><path d="M0.3 8C3.5 2.2 7.5 0 12 0S20.5 2.2 23.7 8C20.5 13.8 16.5 16 12 16S3.5 13.8 0.3 8Z" fill="#9fa3a9"/><circle cx="12" cy="8" r="4.5" fill="#fff"/><circle cx="12" cy="8" r="2.9" fill="#9fa3a9"/></svg><div class="days na">N/A</div><div class="btn dis"><span>Run cleanup</span></div></div>
<!-- /rows -->
</body></html>
